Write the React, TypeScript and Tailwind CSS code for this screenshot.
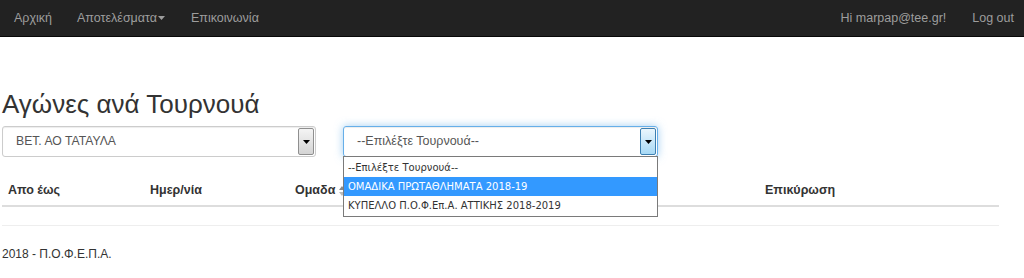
import React from 'react';

const Arrow: React.FC<{ focused?: boolean }> = ({ focused }) => (
  <span
    className={
      'flex h-full w-[16px] items-center justify-center rounded-[2px] border ' +
      (focused
        ? 'border-[#3c7fb1] bg-gradient-to-b from-[#eaf6fd] to-[#a7d9f5]'
        : 'border-[#8f8f8f] bg-gradient-to-b from-[#f4f4f4] to-[#d4d4d4]')
    }
  >
    <svg width="7" height="4" viewBox="0 0 7 4">
      <path d="M0 0h7L3.5 4z" fill="#000" />
    </svg>
  </span>
);

export default function App() {
  const options = [
    '--Επιλέξτε Τουρνουά--',
    'ΟΜΑΔΙΚΑ ΠΡΩΤΑΘΛΗΜΑΤΑ 2018-19',
    'ΚΥΠΕΛΛΟ Π.Ο.Φ.Επ.Α. ΑΤΤΙΚΗΣ 2018-2019',
  ];

  return (
    <div className="h-[278px] w-[1024px] bg-white font-['Liberation_Sans',Arial,sans-serif] text-[#333]">
      <nav className="flex h-[37px] items-center justify-between border-b border-[#080808] bg-[#222] text-[12.5px] text-[#9d9d9d]">
        <div className="flex items-center">
          <span className="pl-[14px]">Αρχική</span>
          <span className="flex items-center pl-[25px]">
            Αποτελέσματα
            <svg width="7" height="4" viewBox="0 0 7 4" className="ml-[1px]">
              <path d="M0 0h7L3.5 4z" fill="#9d9d9d" />
            </svg>
          </span>
          <span className="pl-[26px]">Επικοινωνία</span>
        </div>
        <div className="flex items-center pr-[10px]">
          <span>Hi marpap@tee.gr!</span>
          <span className="pl-[26px]">Log out</span>
        </div>
      </nav>

      <div className="w-[1000px] pl-[2px] pr-[1px]">
        <h2 className="mt-[50px] text-[26px] leading-[34px] text-[#333]">Αγώνες ανά Τουρνουά</h2>

        <div className="mt-[5px] flex gap-[27px]">
          <div className="flex h-[31px] w-[314px] items-center justify-between rounded-[3px] border border-[#ccc] pl-[13px] pr-[1px] py-[1px] text-[12.2px] text-[#555] shadow-[inset_0_1px_1px_rgba(0,0,0,0.075)]">
            <span>ΒΕΤ. ΑΟ ΤΑΤΑΥΛΑ</span>
            <Arrow />
          </div>

          <div className="relative">
            <div className="flex h-[31px] w-[315px] items-center justify-between rounded-[3px] border border-[#66afe9] pl-[13px] pr-[1px] py-[1px] text-[12.5px] text-[#555] shadow-[inset_0_1px_1px_rgba(0,0,0,0.075),0_0_8px_rgba(102,175,233,0.6)]">
              <span>--Επιλέξτε Τουρνουά--</span>
              <Arrow focused />
            </div>
            <ul className="absolute left-0 top-[30px] z-10 w-[315px] border border-[#7a7a7a] bg-white py-[1px] font-['DejaVu_Sans',Tahoma,sans-serif] text-[10px] leading-[19px] text-[#333]">
              {options.map((o, i) => (
                <li
                  key={o}
                  className={'px-[4px] ' + (i === 1 ? 'bg-[#3399ff] text-white' : '')}
                >
                  {o}
                </li>
              ))}
            </ul>
          </div>
        </div>

        <div className="mt-[19px] flex h-[31px] items-center border-b-2 border-[#ddd] text-[12.5px] font-bold">
          <span className="w-[148px] pl-[6px]">Απο έως</span>
          <span className="w-[145px]">Ημερ/νία</span>
          <span className="flex w-[470px] items-center">
            Ομαδα
            <svg width="6" height="10" viewBox="0 0 6 10" className="ml-[4px]">
              <path d="M3 0L6 4H0z" fill="#888" />
              <path d="M3 10L6 6H0z" fill="#bbb" />
            </svg>
          </span>
          <span>Επικύρωση</span>
        </div>

        <div className="mt-[18px] border-t border-[#eee]" />
        <footer className="pt-[19px] text-[12px] text-[#333]">2018 - Π.Ο.Φ.Ε.Π.Α.</footer>
      </div>
    </div>
  );
}
